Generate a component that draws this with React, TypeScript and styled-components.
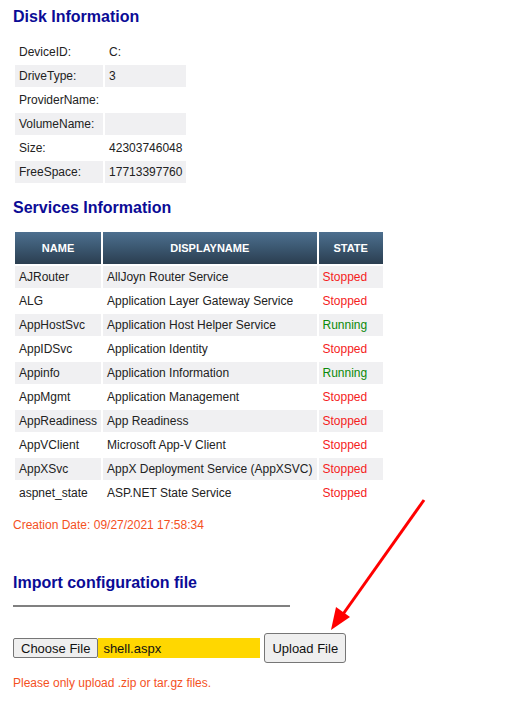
import React from "react";
import styled, { createGlobalStyle } from "styled-components";

const GlobalStyle = createGlobalStyle`
  html, body {
    margin: 0;
    padding: 0;
    background: #ffffff;
  }
  body {
    font-family: "Liberation Sans", Arial, sans-serif;
    font-size: 12px;
    color: #222222;
  }
`;

const Page = styled.div`
  position: relative;
  padding: 7px 13px 20px;
  width: 524px;
  box-sizing: border-box;
`;

const Title = styled.h2<{ $top?: number }>`
  margin: ${(p) => p.$top ?? 0}px 0 0;
  font-size: 16px;
  line-height: 20px;
  font-weight: bold;
  color: #0b0b96;
`;

const InfoTable = styled.table<{ $top: number }>`
  margin-top: ${(p) => p.$top}px;
  border-collapse: separate;
  border-spacing: 2px;
  margin-left: 0;
  font-size: 12px;
`;

const Cell = styled.td<{ $shade?: boolean }>`
  padding: 4px;
  line-height: 14px;
  white-space: nowrap;
  background: ${(p) => (p.$shade ? "#f0f0f2" : "transparent")};
`;

const HeadCell = styled.th`
  padding: 9px 15px;
  line-height: 14px;
  font-size: 11px;
  font-weight: bold;
  color: #ffffff;
  text-transform: uppercase;
  background: linear-gradient(to bottom, #4d6f8f 0%, #3b5770 50%, #2b3e50 100%);
`;

const State = styled(Cell)<{ $running: boolean }>`
  color: ${(p) => (p.$running ? "#0a8a0a" : "#f51d1d")};
`;

const Note = styled.div<{ $top: number }>`
  margin-top: ${(p) => p.$top}px;
  color: #f4511e;
  font-size: 12px;
  line-height: 14px;
`;

const Rule = styled.div`
  margin-top: 12px;
  width: 277px;
  height: 2px;
  background: #808080;
`;

const UploadRow = styled.div`
  margin-top: 26px;
  display: flex;
  align-items: center;
  height: 30px;
`;

const ChooseButton = styled.span`
  display: inline-flex;
  align-items: center;
  box-sizing: border-box;
  height: 20px;
  padding: 0 7px;
  font-size: 13px;
  color: #111;
  background: #efefef;
  border: 1px solid #767676;
  border-radius: 2px;
`;

const FileName = styled.span`
  display: inline-flex;
  align-items: center;
  box-sizing: border-box;
  height: 20px;
  width: 162px;
  padding-left: 5px;
  font-size: 13px;
  color: #111;
  background: #ffd700;
`;

const UploadButton = styled.button`
  margin-left: 4px;
  height: 30px;
  padding: 0 7px;
  font-family: "Liberation Sans", Arial, sans-serif;
  font-size: 13px;
  color: #111;
  background: #efefef;
  border: 1px solid #767676;
  border-radius: 3px;
`;

const Arrow = styled.svg`
  position: absolute;
  left: 0;
  top: 0;
  pointer-events: none;
`;

const disk: [string, string][] = [
  ["DeviceID:", "C:"],
  ["DriveType:", "3"],
  ["ProviderName:", ""],
  ["VolumeName:", ""],
  ["Size:", "42303746048"],
  ["FreeSpace:", "17713397760"],
];

const services: [string, string, string][] = [
  ["AJRouter", "AllJoyn Router Service", "Stopped"],
  ["ALG", "Application Layer Gateway Service", "Stopped"],
  ["AppHostSvc", "Application Host Helper Service", "Running"],
  ["AppIDSvc", "Application Identity", "Stopped"],
  ["Appinfo", "Application Information", "Running"],
  ["AppMgmt", "Application Management", "Stopped"],
  ["AppReadiness", "App Readiness", "Stopped"],
  ["AppVClient", "Microsoft App-V Client", "Stopped"],
  ["AppXSvc", "AppX Deployment Service (AppXSVC)", "Stopped"],
  ["aspnet_state", "ASP.NET State Service", "Stopped"],
];

const App = () => {
  return (
    <Page>
      <GlobalStyle />
      <Title>Disk Information</Title>
      <InfoTable $top={12}>
        <tbody>
          {disk.map(([label, value], i) => (
            <tr key={label}>
              <Cell $shade={i % 2 === 1}>{label}</Cell>
              <Cell $shade={i % 2 === 1}>{value}</Cell>
            </tr>
          ))}
        </tbody>
      </InfoTable>

      <Title $top={13}>Services Information</Title>
      <InfoTable $top={12}>
        <thead>
          <tr>
            <HeadCell>Name</HeadCell>
            <HeadCell>DisplayName</HeadCell>
            <HeadCell>State</HeadCell>
          </tr>
        </thead>
        <tbody>
          {services.map(([name, display, state], i) => (
            <tr key={name}>
              <Cell $shade={i % 2 === 0}>{name}</Cell>
              <Cell $shade={i % 2 === 0}>{display}</Cell>
              <State $shade={i % 2 === 0} $running={state === "Running"}>
                {state}
              </State>
            </tr>
          ))}
        </tbody>
      </InfoTable>

      <Note $top={12}>Creation Date: 09/27/2021 17:58:34</Note>

      <Title $top={41}>Import configuration file</Title>
      <Rule />
      <UploadRow>
        <ChooseButton>Choose File</ChooseButton>
        <FileName>shell.aspx</FileName>
        <UploadButton type="button">Upload File</UploadButton>
      </UploadRow>
      <Note $top={13}>Please only upload .zip or tar.gz files.</Note>

      <Arrow width="524" height="714" viewBox="0 0 524 714">
        <line x1="424" y1="500" x2="341" y2="617" stroke="#ff0000" strokeWidth="3" />
        <polygon points="331,630 336,607 350,617" fill="#ff0000" />
      </Arrow>
    </Page>
  );
};

export default App;
